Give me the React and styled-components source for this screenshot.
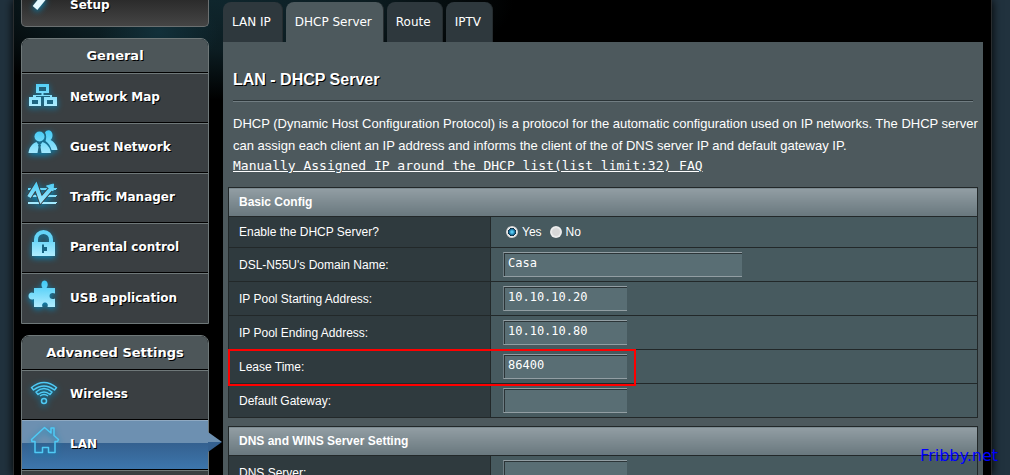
import React from 'react'
import styled, { createGlobalStyle } from 'styled-components'

const GlobalStyle = createGlobalStyle`
* { box-sizing: border-box; }
html, body { margin: 0; padding: 0; }
body {
  background-color: #21323e;
  color: #fff;
  font-family: "Liberation Sans", Arial, sans-serif;
  font-size: 12px;
  overflow: hidden;
}
`;

const Page = styled.div`
position: relative;
display: flex;
height: 100vh;
overflow: hidden;
padding: 0 18px 0 13px;
`;

const Shell = styled.div`
display: flex;
align-items: flex-start;
gap: 14px;
flex: 1;
min-width: 0;
padding: 0 8px 0 7px;
border: solid #2a2d2f;
border-width: 0 1px;
box-shadow: 0 0 9px #000;
background:
  radial-gradient(ellipse 60px 40px at 145px 32px, #12303a 0%, transparent 100%),
  radial-gradient(ellipse 300px 100px at 200px 0, #0f262d 0%, #0c1d22 50%, transparent 100%),
  #000;
`;

const Sidebar = styled.nav`
display: flex;
flex-direction: column;
flex: none;
width: 188px;
font-family: "DejaVu Sans", Verdana, sans-serif;
font-size: 12px;
font-weight: 700;
text-shadow: 1px 1px 0 #000;
`;

const SetupLink = styled.a`
display: flex;
align-items: flex-start;
gap: 10px;
height: 27px;
margin-bottom: 11px;
padding-left: 2px;
border: 1px solid #6b7071;
border-top: none;
border-radius: 0 0 5px 5px;
background: linear-gradient(#2b2b2b, #454545);
color: #fff;
line-height: 10px;
text-decoration: none;
`;

const Menu = styled.section`
margin-bottom: 11px;
border: 1px solid #6f7879;
border-radius: 8px 8px 0 0;
`;

const MenuTitle = styled.h2`
margin: 0;
height: 34px;
border-bottom: 1px solid #000;
border-radius: 7px 7px 0 0;
background: #4d5659;
font-size: 13px;
line-height: 34px;
text-align: center;
`;

const MenuLink = styled.a`
position: relative;
display: flex;
align-items: center;
gap: 10px;
height: 50px;
padding: 0 0 2px 2px;
border-top: 1px solid ${({ $active }) => ($active ? '#8fa9c2' : '#6f7879')};
border-bottom: 1px solid #000;
background: ${({ $active }) =>
  $active ? 'linear-gradient(#6d90b1 0 45%, #34608f 45%, #3d76ac)' : '#3a3f42'};
color: #fff;
text-decoration: none;

&:last-child {
  border-bottom: none;
}
`;

const Pointer = styled.span`
position: absolute;
left: 100%;
top: 11px;
width: 14px;
height: 20px;
background: linear-gradient(#6d90b1 50%, #34608f 50%);
clip-path: polygon(0 0, 100% 50%, 0 100%);
`;

const Icon = styled.svg`
flex: none;
width: 36px;
height: 36px;
overflow: visible;
filter: drop-shadow(0 2px 3px #0787b8);
`;

const Main = styled.main`
flex: 1;
min-width: 0;
`;

const Tabs = styled.div`
display: flex;
gap: 3px;
padding-top: 2px;
`;

const Tab = styled.button`
height: 40px;
padding: 0 11px 0 9px;
border: none;
border-right: 1px solid #252c2f;
border-radius: 8px 8px 0 0;
background: ${({ $active }) => ($active ? '#4d595d' : '#2e383d')};
color: #fff;
font-family: "DejaVu Sans", Verdana, sans-serif;
font-size: 12px;
`;

const Panel = styled.div`
padding: 28px 5px 0;
background: #4d595d;
min-height: 433px;
`;

const Intro = styled.div`
padding: 0 5px;
font-size: 13px;
line-height: 22px;
`;

const Title = styled.h1`
margin: 0 0 11px;
font-size: 16px;
line-height: 19px;
text-shadow: 1px 1px 0 #000;
`;

const Divider = styled.hr`
height: 2px;
margin: 0 0 11px;
border: none;
border-top: 1px solid #2b3437;
background: #717d82;
`;

const Text = styled.p`
margin: 0 -10px 0 0;
`;

const FaqLink = styled.a`
display: block;
margin-bottom: 12px;
color: #fff;
font-family: "DejaVu Sans Mono", "Lucida Console", monospace;
font-size: 13px;
line-height: 18px;
`;

const Table = styled.table`
width: 100%;
margin-bottom: 8px;
border-collapse: collapse;
table-layout: fixed;

td, th {
  height: 34px;
  padding: 0 10px;
  border: 1px solid #222829;
  font-weight: 400;
  text-align: left;
}

thead th {
  height: 29px;
  background: linear-gradient(#929ea4, #68777d);
  font-weight: 700;
}

tbody th {
  position: relative;
  background: #2f3a3e;
}

tbody td {
  background: #475a5f;
  padding-left: 12px;
}

.label-col {
  width: 262px;
}
`;

const Row = styled.tr`
&& > * {
  height: ${({ $short }) => ($short ? '31px' : '34px')};
}
`;

const Field = styled.input`
display: block;
width: ${({ $wide }) => ($wide ? '239px' : '124px')};
height: 25px;
padding: 0 4px 3px;
border: 1px solid #929ea3;
border-left-color: #6e7d83;
border-right: none;
border-radius: 0;
outline: none;
background: #596e74;
box-shadow: inset 1px 1px 0 #2b3437;
color: #fff;
font-family: "DejaVu Sans Mono", "Lucida Console", monospace;
font-size: 12px;
`;

const Choices = styled.div`
display: flex;
gap: 8px;
padding-left: 3px;
`;

const Choice = styled.label`
display: flex;
align-items: center;
gap: 4px;
`;

const Radio = styled.input`
appearance: none;
width: 12px;
height: 12px;
margin: 0;
border-radius: 50%;
background: radial-gradient(circle, #d8d8d8 0 40%, #f2f2f2 60%, #aaa 100%);

&:checked {
  background: radial-gradient(circle, #55c8f0 0 1px, #14638f 3px, #10202c 4px, #f4f4f4 4px, #ccc 6px);
}
`;

const Highlight = styled.span`
position: absolute;
top: -1px;
left: -1px;
width: 408px;
height: 37px;
border: 2px solid #f00;
z-index: 1;
pointer-events: none;
`;

const Watermark = styled.span`
position: absolute;
right: 12px;
bottom: 9px;
color: #00f;
font-family: "DejaVu Sans", Verdana, sans-serif;
font-size: 16px;
line-height: 20px;
`;

const glow = 'url(#glow)'

const icons = {
    wand: <path d="M11 8L20-3" stroke="#e6faff" strokeWidth="6" />,
    network: (
        <g fill={glow} fillRule="evenodd">
            <path d="M12 5h13v9H12zM15 8v4h7V8z" />
            <path d="M5 18h12v9H5zM8 21v4h6v-4zM20 18h13v9H20zM23 21v4h6v-4z" />
            <path d="M17.500 14h2v2H28v2h-2v-1H12v1H9v-2h8.500z" />
        </g>
    ),
    guest: (
        <g fill={glow}>
            <path d="M21 3.500C23-.5 29 1 28.500 6.500c0 2-1 3.500-2 4.500 4 2 6.500 6 7 10h-6c-1-4-3-7-6-9 1-3 1-6-.500-8.500z" />
            <circle cx="15.500" cy="7.500" r="5" />
            <path d="M4.500 24c.500-5 3-9 8-11l3 4 3-4c5 2 8 6 8.500 11z" />
            <path d="M14 16h3l-.5 2 1 6h-4l1-6z" fill="#206580" />
        </g>
    ),
    traffic: (
        <g stroke={glow} fill="none">
            <path d="M4 10h28v.1M4 17h28v.1M4 24h28v.1" strokeWidth="2" />
            <path d="M5 18L12 7l5 14L27.500 9" stroke="#3a3f42" strokeWidth="6" />
            <path d="M5 18L12 7l5 14L27.500 9" strokeWidth="4" />
            <path d="M22.500 7l7-2-.5 7z" fill={glow} strokeWidth="1" />
        </g>
    ),
    lock: (
        <g>
            <path d="M12 14V10.500a7.500 7.500 0 0115 0V14" fill="none" stroke="#64d4f7" strokeWidth="4" />
            <path d="M8 13h23v14H8z" fill={glow} />
            <path d="M18 15.500h2V18h3v4h-3v2h-2z" fill="#176584" />
        </g>
    ),
    puzzle: (
        <path
            fill={glow}
            d="M10 8h8.500c-2-3-1-7.500 2-7.500s4.500 4.500 2 7.500H31v5.500c-3-1.500-5.500 0-5.500 2.500s2.500 4 5.500 2.500V27h-7.500c1-3-.5-4.500-2.500-4.500s-3.500 1.500-2.500 4.500H10v-8c-3 1.500-5.500 0-5.500-3s2.500-4.500 5.500-3z"
        />
    ),
    wireless: (
        <g fill="none" stroke="#4fcaf5" strokeWidth="1.500" strokeLinejoin="round">
            <path d="M7.500 11.500Q20 1.500 32.500 11.500L30.500 14Q20 6 9.500 14z" />
            <path d="M12 16Q20 9 28 16L26 18.500Q20 13.500 14 18.500z" />
            <path d="M16 20Q20 17 24 20" />
            <circle cx="20" cy="25" r="2.500" />
        </g>
    ),
    house: (
        <path
            fill="none"
            stroke="#4fcaf5"
            strokeWidth="1.500"
            strokeLinejoin="round"
            d="M20.500 1.500L27 7V2h3v7.500l4.500 4L33.500 15.500H31V26.500h-6.500V21.500h-6V26.500H11V15.500H8L7.500 13.500z"
        />
    ),
}

const general = [
    { icon: 'network', label: 'Network Map' },
    { icon: 'guest', label: 'Guest Network' },
    { icon: 'traffic', label: 'Traffic Manager' },
    { icon: 'lock', label: 'Parental control' },
    { icon: 'puzzle', label: 'USB application' },
]

const advanced = [
    { icon: 'wireless', label: 'Wireless' },
    { icon: 'house', label: 'LAN', active: true },
]

const fields = [
    { id: 'domain', label: "DSL-N55U's Domain Name:", value: 'Casa', wide: true },
    { id: 'pool-start', label: 'IP Pool Starting Address:', value: '10.10.10.20' },
    { id: 'pool-end', label: 'IP Pool Ending Address:', value: '10.10.10.80' },
    { id: 'lease', label: 'Lease Time:', value: '86400', marked: true },
    { id: 'gateway', label: 'Default Gateway:', value: '' },
]

const MenuIcon = ({ name }) => (
    <Icon viewBox="0 0 36 36" aria-hidden="true">{icons[name]}</Icon>
)

const MenuGroup = ({ title, items, children }) => (
    <Menu>
        <MenuTitle>{title}</MenuTitle>
        {items.map((item) => (
            <MenuLink key={item.label} href="#" $active={item.active}>
                <MenuIcon name={item.icon} />
                {item.label}
                {item.active && <Pointer />}
            </MenuLink>
        ))}
        {children}
    </Menu>
)

const FieldRow = ({ id, label, value, wide, marked }) => (
    <Row>
        <th scope="row">
            <label htmlFor={id}>{label}</label>
            {marked && <Highlight />}
        </th>
        <td><Field id={id} type="text" defaultValue={value} $wide={wide} /></td>
    </Row>
)

const ConfigTable = ({ title, children }) => (
    <Table>
        <colgroup>
            <col className="label-col" />
            <col />
        </colgroup>
        <thead>
            <tr><th colSpan="2">{title}</th></tr>
        </thead>
        <tbody>{children}</tbody>
    </Table>
)

function App() {
    return (
        <Page>
            <GlobalStyle />
            <svg width="0" height="0" style={{ position: 'absolute' }} aria-hidden="true">
                <linearGradient id="glow" gradientUnits="userSpaceOnUse" x1="0" y1="0" x2="0" y2="28">
                    <stop offset="0" stopColor="#3cc8f5" />
                    <stop offset="1" stopColor="#b4eeff" />
                </linearGradient>
            </svg>
            <Shell>
                <Sidebar>
                    <SetupLink href="#">
                        <MenuIcon name="wand" />
                        Setup
                    </SetupLink>
                    <MenuGroup title="General" items={general} />
                    <MenuGroup title="Advanced Settings" items={advanced}>
                        <MenuLink href="#" aria-label="WAN" />
                    </MenuGroup>
                </Sidebar>
                <Main>
                    <Tabs>
                        <Tab>LAN IP</Tab>
                        <Tab $active>DHCP Server</Tab>
                        <Tab>Route</Tab>
                        <Tab>IPTV</Tab>
                    </Tabs>
                    <Panel>
                        <Intro>
                            <Title>LAN - DHCP Server</Title>
                            <Divider />
                            <Text>
                                DHCP (Dynamic Host Configuration Protocol) is a protocol for the automatic configuration used on IP networks. The DHCP server can assign each client an IP address and informs the client of the of DNS server IP and default gateway IP.
                            </Text>
                            <FaqLink href="#">Manually Assigned IP around the DHCP list(list limit:32) FAQ</FaqLink>
                        </Intro>
                        <ConfigTable title="Basic Config">
                            <Row $short>
                                <th scope="row">Enable the DHCP Server?</th>
                                <td>
                                    <Choices role="radiogroup" aria-label="Enable the DHCP Server?">
                                        <Choice><Radio type="radio" name="dhcp" defaultChecked />Yes</Choice>
                                        <Choice><Radio type="radio" name="dhcp" />No</Choice>
                                    </Choices>
                                </td>
                            </Row>
                            {fields.map((field) => <FieldRow key={field.id} {...field} />)}
                        </ConfigTable>
                        <ConfigTable title="DNS and WINS Server Setting">
                            <FieldRow id="dns" label="DNS Server:" value="" />
                        </ConfigTable>
                    </Panel>
                </Main>
            </Shell>
            <Watermark>Fribby.net</Watermark>
        </Page>
    )
}

export default App
